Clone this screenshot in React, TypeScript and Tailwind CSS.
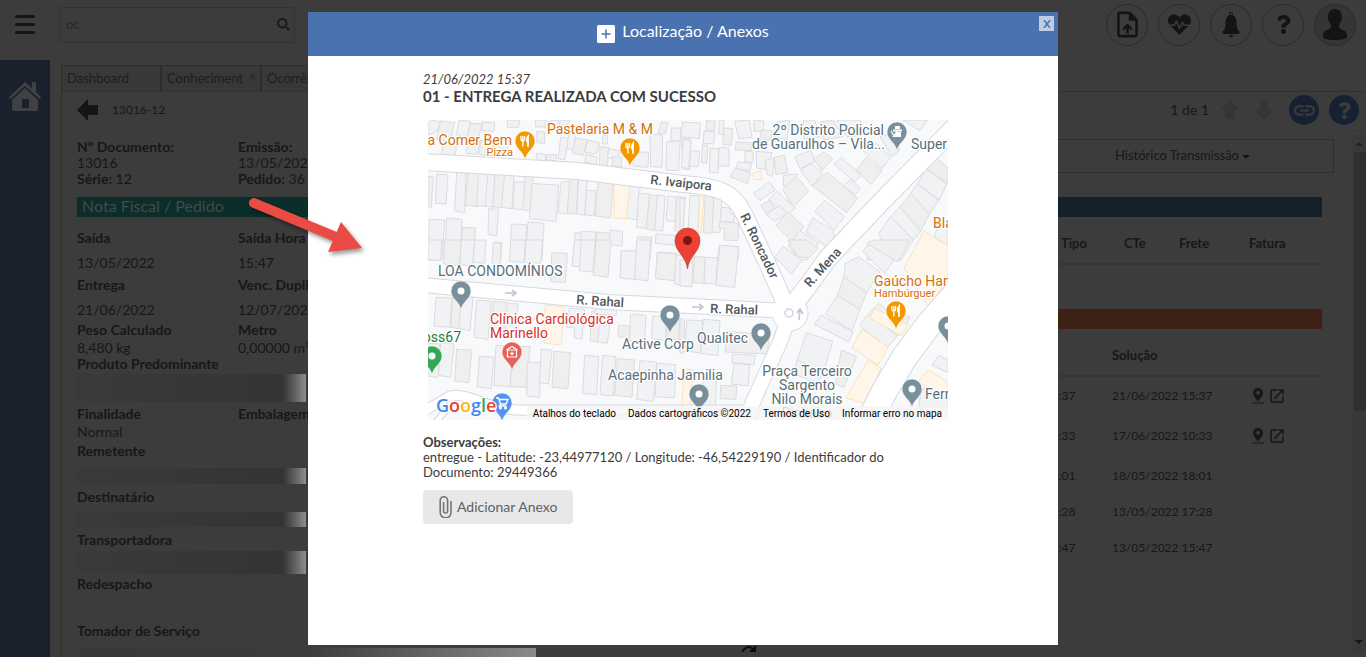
import type { ReactNode } from "react";
import { FaHeartbeat, FaQuestion, FaSearch } from "react-icons/fa";
import { MdOutlineUploadFile, MdOpenInNew, MdLink } from "react-icons/md";

/* ---------- map data ---------- */

// each quadrant is traced on a 3x grid
const quadrants = [
  {
    transform: "translate(-8 -60) scale(.33333)",
    shapes: [
      "35,180 62,186 50,215 24,225 24,190", "62,183 104,188 90,245 50,238", "72,245 112,250 104,288 64,284", "118,180 152,184 142,232 108,226",
      "152,190 186,192 174,240 140,236", "186,186 224,188 222,214 186,212", "145,240 180,246 172,283 138,280", "182,240 222,242 220,286 178,284",
      "262,180 300,180 296,202 262,202", "346,180 376,180 376,202 346,200", "350,214 374,216 374,250 350,248", "238,236 266,240 262,268 236,264",
      "350,280 378,284 376,302 348,300", "380,284 410,284 408,302 378,300", "422,232 446,234 434,300 414,296", "446,222 466,224 462,268 440,266",
      "468,234 502,240 490,286 456,280", "504,240 540,250 528,282 494,276", "498,282 532,292 528,314 494,306", "540,260 568,262 562,318 538,314",
      "548,226 562,226 562,252 548,252", "566,266 600,272 592,300 562,292", "578,290 606,292 604,320 576,318", "640,278 686,276 684,322 640,318",
      "690,222 728,226 726,322 692,320", "724,186 744,188 736,222 714,220", "740,244 780,244 776,332 738,330", "754,204 784,204 780,244 752,242",
      "784,236 810,236 810,330 788,326", "400,180 428,186 404,196 380,186", "420,180 450,180 440,198 418,196",
      "24,350 40,350 34,442 24,440", "50,342 84,345 78,432 46,430", "110,338 138,340 134,458 104,452", "144,328 180,332 176,440 136,436",
      "176,330 206,336 200,440 170,436", "204,336 226,338 220,442 196,438", "226,336 254,338 248,444 218,440", "254,340 282,342 276,446 244,442",
      "284,366 316,366 312,450 278,446", "316,344 340,346 332,452 308,450", "336,370 416,376 408,484 328,476", "424,364 450,366 442,462 414,458",
      "450,354 474,356 470,462 442,460", "476,358 502,360 494,466 470,462", "500,390 528,392 522,468 494,464", "534,362 580,366 572,474 526,468",
      "628,370 662,370 650,480 618,474", "656,400 688,402 680,506 650,502", "690,404 714,408 704,512 678,506", "712,404 736,408 728,514 704,510",
      "744,408 770,412 764,486 738,482", "770,410 796,412 788,516 764,512",
      "28,478 74,480 66,600 24,600", "80,474 126,478 120,600 74,600", "128,502 166,504 160,600 122,600", "164,544 198,548 190,600 160,600",
      "206,446 236,448 230,528 204,524", "222,546 246,548 242,600 220,600", "274,492 320,494 314,600 270,600", "324,486 372,490 366,600 316,600",
      "396,580 440,580 440,600 394,600", "466,518 486,520 476,600 460,600", "484,514 528,516 520,600 478,600", "530,516 574,520 564,600 522,600",
      "570,510 608,514 606,558 568,554", "604,572 650,574 648,600 602,600", "652,530 696,532 690,600 650,600", "708,522 766,526 764,556 706,550", "712,576 770,580 768,600 710,600",
    ],
  },
  {
    transform: "translate(252 -60) scale(.33333)",
    shapes: [
      "8,186 62,190 58,236 2,230", "80,182 106,184 104,212 78,210", "72,212 104,216 102,252 70,250", "118,180 132,180 130,224 116,222",
      "132,204 158,206 154,256 128,254", "164,184 208,180 216,232 176,236", "222,180 252,184 248,214 222,214", "244,210 276,212 274,240 242,240",
      "10,240 34,242 26,326 4,322", "32,272 60,274 54,320 28,318", "68,254 84,256 80,310 64,308", "90,264 118,266 114,340 88,336",
      "118,262 146,264 148,318 114,318", "168,246 214,248 216,272 166,270", "196,274 220,276 218,308 194,306", "174,306 214,310 210,332 168,326",
      "166,324 212,338 202,370 150,350", "228,274 276,278 264,330 230,324", "254,302 282,294 278,350 262,344", "282,292 314,286 324,338 288,344",
      "290,186 330,180 320,240 284,230", "370,180 404,180 420,230 372,236", "420,186 460,180 490,230 430,240", "470,180 540,180 560,226 500,230",
      "344,290 392,272 406,304 360,326", "400,296 432,276 458,296 426,332", "362,330 394,310 428,340 396,378", "462,312 482,292 544,346 524,366",
      "530,330 560,290 606,332 572,374", "548,270 590,250 632,292 606,326", "600,230 640,220 660,270 636,290", "398,378 442,336 532,414 500,458",
      "490,378 512,358 542,386 524,404", "310,346 352,342 346,370 310,378", "308,388 348,348 386,392 340,442", "266,418 292,394 346,444 320,470",
      "220,400 268,366 286,390 240,422", "242,436 270,420 284,446 260,462", "258,462 300,436 320,462 282,484", "404,454 434,422 494,470 462,510",
      "288,496 324,456 372,500 334,542", "378,516 398,474 458,510 464,540 440,560", "324,556 360,512 416,550 380,600 358,600", "280,600 310,560 350,592 346,600",
      "0,414 14,414 10,508 0,506", "30,406 58,408 54,520 24,516", "76,404 102,406 98,520 70,518", "102,408 126,410 120,518 96,516",
      "124,442 150,444 150,460 164,462 162,486 120,484", "120,484 176,490 174,542 132,540 134,506 116,504", "118,556 176,560 174,600 112,600",
      "40,590 76,592 74,600 40,600",
      "764,288 804,324 804,370 738,326", "738,326 800,372 778,420 712,372", "712,372 776,420 748,462 692,400", "692,400 748,462 722,514 660,440",
      "660,440 722,514 700,540 632,470", "632,470 700,540 664,600 620,576 596,520", "582,546 664,600 560,600", "770,510 804,480 804,560 762,530",
      "668,180 720,212 742,180",
    ],
  },
  {
    transform: "translate(-8 120) scale(.33333)",
    shapes: [
      "24,0 66,0 62,62 24,58", "74,0 124,0 118,78 70,72", "124,0 164,0 158,78 120,74", "164,0 198,0 194,70 160,66", "220,8 244,10 240,76 216,72",
      "272,0 316,0 312,68 268,64", "318,0 368,0 362,70 314,66", "396,38 442,40 436,128 392,124", "464,0 488,0 480,80 456,78", "484,0 526,0 518,96 478,92",
      "528,0 574,0 564,112 520,106", "604,32 650,34 644,118 600,114", "650,0 692,0 684,122 644,118", "712,38 770,42 764,122 706,116", "768,44 810,48 810,140 764,132",
      "48,172 96,174 90,262 42,258", "98,160 124,162 118,266 92,262", "124,164 160,166 150,272 116,266", "170,180 214,184 204,298 162,292",
      "220,184 264,188 256,292 212,288", "262,190 294,192 286,290 254,286", "448,204 494,208 486,296 462,294 464,264 440,262", "516,212 544,216 536,306 510,302",
      "544,216 574,218 562,310 532,306", "526,206 590,208 588,226 524,222", "596,256 630,258 628,294 594,290", "632,222 678,226 674,308 628,302",
      "698,228 740,230 736,300 694,296", "742,232 780,234 776,300 740,296", "24,310 60,312 54,412 24,408", "62,308 102,312 92,412 56,406",
      "110,328 156,330 146,428 104,422", "178,348 222,352 214,446 172,440", "228,316 280,318 270,440 222,436", "280,318 330,320 318,442 270,440",
      "322,366 364,368 358,472 320,468", "364,328 396,330 386,432 358,428", "402,334 452,338 444,446 396,442", "494,346 536,350 530,464 488,460",
      "548,346 588,350 580,468 540,464", "592,356 644,360 636,472 584,466", "660,362 710,366 700,484 650,478", "710,370 766,374 764,474 706,470",
    ],
  },
  {
    transform: "translate(252 120) scale(.33333)",
    shapes: [
      "0,60 38,60 36,140 0,138", "44,50 76,52 72,130 38,128", "76,52 112,54 108,132 72,130", "120,16 176,20 164,142 108,136",
      "0,236 14,240 10,340 0,338", "20,240 68,242 62,338 14,334", "70,238 120,242 114,346 62,340", "136,274 268,284 262,342 136,336",
      "158,342 226,346 222,374 156,368", "162,370 210,374 204,438 154,432", "122,436 170,438 168,478 120,476", "70,410 110,412 106,500 66,498",
      "284,50 310,20 366,60 334,102", "324,0 380,0 414,24 388,54 352,50", "380,278 458,304 430,400 352,360", "352,360 430,400 410,430 340,400",
      "484,330 530,350 492,442 466,432", "402,252 424,226 520,276 506,306", "436,222 472,166 540,208 516,272", "472,166 492,110 560,158 540,208",
      "496,70 536,50 600,96 560,158 492,110", "548,34 570,8 642,60 614,100", "580,0 690,0 654,66 560,10", "538,256 566,222 652,288 622,322",
      "566,222 596,190 680,260 652,288", "650,220 690,230 676,262 650,250", "756,376 776,346 804,360 804,398", "722,460 748,420 804,450 804,500 716,500",
      "12,500 60,500 60,540 12,540",
    ],
  },
];

const shops = [
  "186,63 202,65 198,99 186,98", "272,76 276,76 273,113 270,113", "325,53 333,51 334,59 326,60", "117,185 136,187 133,225 116,223",
  "256,249 266,250 262,286 254,285", "446,188 480,205 474,216 442,198", "434,209 460,227 450,245 424,228", "440,240 453,248 438,284 418,278",
  "476,148 496,111 520,126 520,160 500,186", "490,262 500,250 520,262 520,280", "512,165 520,156 520,170",
];

const roads = [
  { d: "M-5 42L150 51L255 64C300 67 307 76 318 98L340 145L359 188", w: 16 },
  { d: "M-5 165L180 182L262 186L358 191", w: 14 },
  { d: "M360 192L382 163L400 138L455 80L530 4", w: 18 },
  { d: "M360 200L352 222L324 284L318 304", w: 14 },
  { d: "M532 169L502 203L476 238L457 270L438 308", w: 25 },
  { d: "M-2 290L22 276C44 272 60 292 100 290H320", w: 9 },
  { d: "M8 302L26 280", w: 5 },
];

const ROAD_LABEL = "font-['Roboto',sans-serif] text-[13px] font-medium";
const PLACE_LABEL = "font-['Roboto',sans-serif] text-[14px]";

const streetNames = [
  { x: 222, y: 64, angle: 6, text: "R. Ivaipora" },
  { x: 312, y: 96, angle: 64, text: "R. Roncador" },
  { x: 382, y: 168, angle: -48, text: "R. Mena" },
  { x: 148, y: 184, angle: 4, text: "R. Rahal" },
  { x: 282, y: 193, angle: 2, text: "R. Rahal" },
];

const places: { x: number; y: number; text: string; fill: string; anchor?: "end" | "middle"; small?: boolean }[] = [
  { x: 119, y: 14, text: "Pastelaria M & M", fill: "#d56e0c" },
  { x: 84, y: 25, text: "a Comer Bem", fill: "#d56e0c", anchor: "end" },
  { x: 85, y: 36, text: "Pizza", fill: "#d56e0c", anchor: "end", small: true },
  { x: 456, y: 15, text: "2º Distrito Policial", fill: "#577079", anchor: "end" },
  { x: 457, y: 29, text: "de Guarulhos – Vila...", fill: "#577079", anchor: "end" },
  { x: 483, y: 29, text: "Super", fill: "#577079" },
  { x: 505, y: 108, text: "Bla", fill: "#d56e0c" },
  { x: 10, y: 156, text: "LOA CONDOMÍNIOS", fill: "#577079" },
  { x: 62, y: 204, text: "Clínica Cardiológica", fill: "#d5312a" },
  { x: 62, y: 218, text: "Marinello", fill: "#d5312a" },
  { x: 33, y: 222, text: "oss67", fill: "#188038", anchor: "end" },
  { x: 194, y: 229, text: "Active Corp", fill: "#577079" },
  { x: 269, y: 223, text: "Qualitec", fill: "#577079" },
  { x: 180, y: 260, text: "Acaepinha Jamilia", fill: "#577079" },
  { x: 379, y: 256, text: "Praça Terceiro", fill: "#577079", anchor: "middle" },
  { x: 379, y: 270, text: "Sargento", fill: "#577079", anchor: "middle" },
  { x: 379, y: 284, text: "Nilo Morais", fill: "#577079", anchor: "middle" },
  { x: 379, y: 298, text: "Pinheiro", fill: "#577079", anchor: "middle" },
  { x: 446, y: 166, text: "Gaúcho Ham", fill: "#d56e0c" },
  { x: 446, y: 177, text: "Hambúrguer", fill: "#d56e0c", small: true },
  { x: 497, y: 279, text: "Ferr", fill: "#577079" },
];

const glyphs: Record<string, ReactNode> = {
  dot: <circle r="3.5" fill="#fff" />,
  food: (
    <g stroke="#fff" fill="none" strokeLinecap="round">
      <path d="M-4-4.5v3q0 1.5 1.8 1.5T-.4-1.5v-3M-2.2-4.5V5" strokeWidth="1.3" />
      <path d="M3 5v-9.500q-1.500 2-1 5h1" strokeWidth="1.800" />
    </g>
  ),
  police: (
    <g fill="#fff">
      <path d="M-2-6h5v3h-5zM-4-2.500h9v2h-9zM-1 0h5v5h-9l3-2z" />
      <path d="M-6-1l3 5 3-5" fill="none" stroke="#fff" strokeWidth="1.300" />
    </g>
  ),
  clinic: (
    <g fill="none" stroke="#fff" strokeWidth="1.200">
      <path d="M-5.500-2L0-5.500 5.500-2M-4.500-2v7h9v-7zM0-.500v4M-2 1.500h4" />
    </g>
  ),
  cart: (
    <g fill="none" stroke="#fff" strokeWidth="1.400">
      <path d="M-6-5h2.500l2 6h5.500l2-4.500h-8.500M-1.500 1l-1 2h7" />
      <circle cx="-1.500" cy="5" r=".8" fill="#fff" />
      <circle cx="3.500" cy="5" r=".8" fill="#fff" />
    </g>
  ),
};

const pins = [
  { x: 97, y: 21, fill: "#f29900", glyph: "food" },
  { x: 202, y: 28, fill: "#f29900", glyph: "food" },
  { x: 469, y: 12, fill: "#78909c", glyph: "police" },
  { x: 33, y: 171, fill: "#78909c", glyph: "dot" },
  { x: 4, y: 236, fill: "#34a853", glyph: "dot" },
  { x: 84, y: 232, fill: "#e5635c", glyph: "clinic" },
  { x: 242, y: 195, fill: "#78909c", glyph: "dot" },
  { x: 74, y: 283, fill: "#5491f5", glyph: "cart" },
  { x: 333, y: 213, fill: "#78909c", glyph: "dot" },
  { x: 271, y: 274, fill: "#78909c", glyph: "dot" },
  { x: 468, y: 191, fill: "#f29900", glyph: "food" },
  { x: 484, y: 269, fill: "#78909c", glyph: "dot" },
  { x: 520, y: 206, fill: "#78909c", glyph: "dot" },
];

function MapView() {
  return (
    <div className="relative mx-[5px] mt-[15px] h-[300px] w-[520px] overflow-hidden">
      <svg viewBox="0 0 520 300" width="520" height="300" className="block bg-[#f8f9fb]">
        {quadrants.map((q) => (
          <g key={q.transform} transform={q.transform} stroke="#dadce0" strokeWidth="3">
            {q.shapes.map((points, i) => (
              <polygon key={points} points={points} fill={i % 3 === 1 ? "#f0efef" : "#f0f2f4"} />
            ))}
          </g>
        ))}
        {shops.map((points) => (
          <polygon key={points} points={points} fill="#fff5e9" stroke="#fbe3bb" />
        ))}

        <g fill="none" stroke="#d5d8e0">
          {roads.map((r) => <path key={r.d} d={r.d} strokeWidth={r.w + 2} />)}
        </g>
        <circle cx="362" cy="193" r="18" fill="#fff" stroke="#d5d8e0" />
        <g fill="none" stroke="#fff">
          {roads.map((r) => <path key={r.d} d={r.d} strokeWidth={r.w} />)}
        </g>
        <circle cx="361" cy="193" r="4" fill="#fff" stroke="#ced2dc" strokeWidth="1.500" />
        <g fill="none" stroke="#c0c5d6" strokeWidth="1.600">
          <path d="M77 173h10M84 170l4 3-4 3" />
          <path d="M264 187h9M271 184l4 3-4 3" />
          <path d="M371 200l1-10M369 193l3-4 3 5" />
        </g>

        <g className={ROAD_LABEL} fill="#50575e" stroke="#fff" strokeWidth="3" paintOrder="stroke" strokeLinejoin="round">
          {streetNames.map((s) => (
            <text key={s.x} transform={`translate(${s.x} ${s.y}) rotate(${s.angle})`}>{s.text}</text>
          ))}
        </g>

        {pins.map((p) => (
          <g key={`${p.x}-${p.y}`} transform={`translate(${p.x} ${p.y})`}>
            <path d="M0 18.500C-2 10-10 7.500-10 0a10 10 0 1 1 20 0C10 7.500 2 10 0 18.500Z" fill={p.fill} stroke="#fff" strokeWidth=".5" />
            {glyphs[p.glyph]}
          </g>
        ))}

        <g className={PLACE_LABEL} stroke="#fff" strokeWidth="2.500" paintOrder="stroke" strokeLinejoin="round">
          {places.map((p) => (
            <text key={p.text} x={p.x} y={p.y} fill={p.fill} textAnchor={p.anchor} className={p.small ? "text-[11px]" : undefined}>
              {p.text}
            </text>
          ))}
        </g>

        <path d="M259.500 149C258 136 247 132 247 120.500a12.500 12.500 0 0 1 25 0C272 132 261 136 259.500 149Z" fill="#ea4335" stroke="#c5362c" strokeWidth=".6" />
        <circle cx="259.500" cy="120.500" r="4.500" fill="#811411" />

        <text x="8" y="292" className="font-['Open_Sans',sans-serif] text-[18px] font-semibold" stroke="#fff" strokeWidth="2" paintOrder="stroke">
          <tspan fill="#4285f4">G</tspan><tspan fill="#ea4335">o</tspan><tspan fill="#fbbc05">o</tspan>
          <tspan fill="#4285f4">g</tspan><tspan fill="#34a853">l</tspan><tspan fill="#ea4335">e</tspan>
        </text>
      </svg>
      <div className="absolute right-0 bottom-0 flex h-[14px] items-center gap-3 bg-[#f5f5f5]/80 px-[6px] font-['Roboto',sans-serif] text-[10px] whitespace-nowrap text-black">
        <button type="button">Atalhos do teclado</button>
        <span>Dados cartográficos ©2022</span>
        <a href="#termos">Termos de Uso</a>
        <a href="#erro">Informar erro no mapa</a>
      </div>
    </div>
  );
}

/* ---------- background page ---------- */

const headerButton = "flex size-[42px] items-center justify-center rounded-full border border-[#2b2b2b] text-[#141414]";

function TopBar() {
  return (
    <header className="flex h-[50px] shrink-0 items-center border-b border-[#393939] pr-[10px] pl-[15px]">
      <button type="button" aria-label="Menu" className="flex flex-col gap-[5px]">
        <span className="h-[3px] w-5 rounded bg-[#151515]" />
        <span className="h-[3px] w-5 rounded bg-[#151515]" />
        <span className="h-[3px] w-5 rounded bg-[#151515]" />
      </button>
      <form className="ml-[25px] flex h-[36px] w-[235px] items-center border border-[#333] px-1">
        <input aria-label="Pesquisar" defaultValue="oc" className="w-full bg-transparent px-px text-[13px] text-[#262626] outline-none" />
        <button type="submit" aria-label="Buscar"><FaSearch className="size-[13px] text-[#1c1c1c]" /></button>
      </form>
      <div className="ml-auto flex gap-[10px]">
        <button type="button" aria-label="Enviar arquivo" className={headerButton}><MdOutlineUploadFile className="size-[31px]" /></button>
        <button type="button" aria-label="Status" className={headerButton}><FaHeartbeat className="size-[23px]" /></button>
        <button type="button" aria-label="Notificações" className={headerButton}><BellIcon /></button>
        <button type="button" aria-label="Ajuda" className={headerButton}><FaQuestion className="size-[19px]" /></button>
        <button type="button" aria-label="Perfil" className={`${headerButton} bg-[#343535]`}>
          <svg viewBox="0 0 24 31" width="24" height="31" fill="currentColor">
            <path d="M12 0c5 0 7 4 7 8 0 4-2 6-3 8 0 3 1 4 4 5 3 1 4 3 4 7 0 2-5 3-12 3S0 30 0 28c0-4 1-6 4-7 3-1 4-2 4-5-1-2-3-4-3-8 0-4 2-8 7-8Z" />
          </svg>
        </button>
      </div>
    </header>
  );
}

function BellIcon() {
  return (
    <svg viewBox="0 0 18 26" width="18" height="26" fill="currentColor">
      <circle cx="9" cy="2" r="1.500" fill="none" stroke="currentColor" />
      <path d="M9 3c4 0 5.500 4 5.500 8 0 5 1 7 3 8.500.8 1-.2 2.500-1.500 2.500H2C.7 22-.3 20.500.5 19.500c2-1.500 3-3.500 3-8.500C3.500 7 5 3 9 3ZM7 23h4c0 3-4 3-4 0Z" />
    </svg>
  );
}

function Tabs() {
  return (
    <nav className="flex h-[26px] pl-[11px] text-[13px] text-[#1e1e1e]">
      <button type="button" className="w-[100px] border border-b-0 border-[#2d2d2d] bg-[#383838] pl-[5px] text-left">Dashboard</button>
      <button type="button" className="flex w-[100px] justify-between border border-b-0 border-[#2d2d2d] bg-[#383838] px-[5px] pt-[3px] text-left">
        Conheciment <span className="text-[10px] leading-3">x</span>
      </button>
      <button type="button" className="w-[100px] border border-b-0 border-[#2d2d2d] bg-[#383838] pl-[5px] text-left">Ocorrências</button>
    </nav>
  );
}

function Arrow({ className }: { className: string }) {
  return (
    <svg viewBox="0 0 22 22" className={className} fill="currentColor"><path d="M0 11L11 0v6h10v10H11v6z" /></svg>
  );
}

function Toolbar() {
  return (
    <div className="flex h-[39px] shrink-0 items-center border-b border-[#393939] pr-[7px] pb-[2px] pl-[15px]">
      <button type="button" aria-label="Voltar"><Arrow className="size-[22px] text-[#151515]" /></button>
      <span className="ml-[13px] text-[12px]">13016-12</span>
      <span className="ml-auto text-[14px] leading-4">1 de 1</span>
      <button type="button" aria-label="Anterior" className="ml-[11px]"><Arrow className="size-[20px] rotate-90 text-[#353535]" /></button>
      <button type="button" aria-label="Próximo" className="ml-[14px]"><Arrow className="size-[20px] -rotate-90 text-[#353535]" /></button>
      <button type="button" aria-label="Copiar link" className="ml-[15px] flex size-[30px] items-center justify-center rounded-full bg-[#182134] text-[#3c3c3c]">
        <MdLink className="size-[25px]" />
      </button>
      <button type="button" aria-label="Ajuda" className="ml-[10px] flex size-[30px] items-center justify-center rounded-full bg-[#182134] text-[#3c3c3c]">
        <FaQuestion className="size-[17px]" />
      </button>
    </div>
  );
}

function Pair({ a, b, className }: { a: ReactNode; b?: ReactNode; className?: string }) {
  return (
    <div className={`flex ${className ?? ""}`}>
      <span className="w-[161px] shrink-0">{a}</span>
      <span className="whitespace-nowrap">{b}</span>
    </div>
  );
}

function Redacted({ className }: { className: string }) {
  return <div className={`-ml-[2px] w-[231px] bg-linear-to-r from-[#3a3a3a] via-[#343434] via-90% to-[#8e8e8e] ${className}`} />;
}

function DocumentInfo() {
  return (
    <section className="w-[500px] shrink-0 text-[14px] leading-4">
      <Pair a={<b>Nº Documento:</b>} b={<b>Emissão:</b>} />
      <Pair a="13016" b="13/05/2022" />
      <Pair a={<><b>Série:</b> 12</>} b={<><b>Pedido:</b> 36</>} />
      <h2 className="mt-[10px] h-5 bg-[#0b2e2a] pl-[5px] text-[16px] leading-[18px] text-[#434a49]">Nota Fiscal / Pedido</h2>
      <Pair className="mt-[13px] font-bold" a="Saída" b="Saída Hora" />
      <Pair className="mt-[9px]" a="13/05/2022" b="15:47" />
      <Pair className="mt-[6px] font-bold" a="Entrega" b="Venc. Duplicata" />
      <Pair className="mt-[9px]" a="21/06/2022" b="12/07/2022" />
      <Pair className="mt-1 font-bold" a="Peso Calculado" b="Metro" />
      <Pair className="mt-[2px]" a="8,480 kg" b="0,00000 m³" />
      <div className="font-bold">Produto Predominante</div>
      <Redacted className="mt-[2px] h-7" />
      <Pair className="mt-1 font-bold" a="Finalidade" b="Embalagem" />
      <div className="mt-[2px]">Normal</div>
      <div className="mt-[3px] font-bold">Remetente</div>
      <Redacted className="mt-[9px] h-4" />
      <div className="mt-[5px] font-bold">Destinatário</div>
      <Redacted className="mt-[7px] h-[15px]" />
      <div className="mt-[5px] font-bold">Transportadora</div>
      <Redacted className="mt-[3px] h-[23px]" />
      <div className="mt-[2px] font-bold">Redespacho</div>
      <div className="mt-[31px] font-bold">Tomador de Serviço</div>
    </section>
  );
}

const occurrences = [
  { date: "21/06/2022 15:37", solution: "21/06/2022 15:37", pinned: true, height: "h-[38px]" },
  { date: "17/06/2022 10:33", solution: "17/06/2022 10:33", pinned: true, height: "h-[44px]" },
  { date: "18/05/2022 18:01", solution: "18/05/2022 18:01", pinned: false, height: "h-[36px]" },
  { date: "13/05/2022 17:28", solution: "13/05/2022 17:28", pinned: false, height: "h-[36px]" },
  { date: "13/05/2022 15:47", solution: "13/05/2022 15:47", pinned: false, height: "h-[36px]" },
];

function PinIcon() {
  return (
    <svg viewBox="0 0 12 16" width="12" height="16" fill="currentColor">
      <path fillRule="evenodd" d="M6 0a5 5 0 0 1 5 5c0 3-3 6-5 8.500C4 11 1 8 1 5a5 5 0 0 1 5-5Zm0 3a1.900 1.900 0 1 0 0 3.800A1.900 1.900 0 0 0 6 3ZM0 14.500h12v1H0z" />
    </svg>
  );
}

function History() {
  return (
    <section className="ml-10 flex-1 text-[13px]">
      <div className="flex h-[34px] items-center justify-end border border-[#2d2d2d] pr-[83px]">
        <button type="button" className="flex items-center gap-[3px]">
          Histórico Transmissão
          <span className="mt-[2px] border-x-4 border-t-4 border-x-transparent border-t-[#151515]" />
        </button>
      </div>
      <div className="mr-3">
        <div className="mt-6 h-5 bg-[#14212b]" />
        <table className="w-full table-fixed text-left">
          <thead>
            <tr className="h-[47px] border-b-2 border-[#363636]">
              <td />
              <th className="w-[63px] pt-2">Tipo</th>
              <th className="w-[55px] pt-2">CTe</th>
              <th className="w-[70px] pt-2">Frete</th>
              <th className="w-[73px] pt-2">Fatura</th>
            </tr>
          </thead>
        </table>
        <div className="mt-11 h-5 bg-[#3e2116]" />
        <table className="w-full table-fixed text-left">
          <thead>
            <tr className="h-[47px] border-b-2 border-[#363636]">
              <td />
              <td className="w-[137px]" />
              <th className="w-[140px] pt-2">Solução</th>
              <td className="w-[70px]" />
            </tr>
          </thead>
          <tbody className="text-[12px]">
            {occurrences.map((o) => (
              <tr key={o.date} className={o.height}>
                <td />
                <td>{o.date}</td>
                <td>{o.solution}</td>
                <td>
                  {o.pinned && (
                    <span className="flex items-center gap-1">
                      <a href="#mapa" aria-label="Localização"><PinIcon /></a>
                      <a href="#abrir" aria-label="Abrir"><MdOpenInNew className="size-[18px]" /></a>
                    </span>
                  )}
                </td>
              </tr>
            ))}
          </tbody>
        </table>
      </div>
    </section>
  );
}

function Scrollbar() {
  return (
    <div className="ml-[18px] flex w-[14px] shrink-0 flex-col items-center bg-[#393939]">
      <span className="mt-[7px] border-x-4 border-b-4 border-x-transparent border-b-[#222]" />
      <span className="mt-[6px] h-[259px] w-3 self-end bg-[#2f2f2f]" />
      <span className="mt-auto mb-[7px] border-x-4 border-t-4 border-x-transparent border-t-[#151515]" />
    </div>
  );
}

/* ---------- modal ---------- */

function LocationModal() {
  return (
    <div role="dialog" aria-labelledby="modal-title" className="flex w-[750px] flex-col bg-white text-[#3c3c3c]">
      <div className="relative flex h-[44px] items-center justify-center gap-[7px] bg-[#4a72b0] pb-1 text-white">
        <svg viewBox="0 0 18 18" width="18" height="18" className="mt-1">
          <rect width="18" height="18" rx="1.500" fill="#fff" />
          <path d="M9 4.500v9M4.500 9h9" stroke="#4a72b0" strokeWidth="1.500" />
        </svg>
        <h1 id="modal-title" className="pb-[2px] text-[16px]">Localização / Anexos</h1>
        <button type="button" aria-label="Fechar" className="absolute top-1 right-1 flex size-[15px] items-center justify-center bg-[#c0cce1]">
          <svg viewBox="0 0 8 8" width="8" height="8" stroke="#4a72b0" strokeWidth="1.500"><path d="M1 0l6 8M7 0L1 8" /></svg>
        </button>
      </div>
      <div className="mx-auto w-[520px] pt-4 text-[13px] leading-[15px]">
        <p className="italic">21/06/2022 15:37</p>
        <h2 className="mt-[1px] text-[15px] leading-[17px] font-bold">01 - ENTREGA REALIZADA COM SUCESSO</h2>
        <MapView />
        <p className="mt-[15px] font-bold">Observações:</p>
        <p>entregue - Latitude: -23,44977120 / Longitude: -46,54229190 / Identificador do Documento: 29449366</p>
        <button type="button" className="mt-[10px] flex h-[34px] w-[150px] items-center rounded bg-[#e8e8e8] pb-px pl-4 text-[14px] text-[#616161]">
          <svg viewBox="0 0 13 22" width="13" height="22" fill="none" stroke="#757575" strokeWidth="1.600" className="mr-[5px]">
            <path d="M12 5v11.500a5.300 5.300 0 0 1-10.800 0V4.500a3.700 3.700 0 0 1 7.400 0V15a2 2 0 0 1-4 0V6" />
          </svg>
          Adicionar Anexo
        </button>
      </div>
    </div>
  );
}

export default function App() {
  return (
    <div className="relative flex h-screen flex-col overflow-hidden bg-[#3c3c3c] font-['Lato','Open_Sans',sans-serif] text-[#171717]">
      <TopBar />
      <div className="mt-[10px] flex min-h-0 flex-1">
        <aside className="w-[50px] shrink-0 bg-[#1a202c] pt-5">
          <a href="#inicio" aria-label="Início" className="flex justify-center">
            <svg viewBox="0 0 32 32" width="32" height="32" fill="#3f4145">
              <path d="M16 2L0 17l1.500 2L16 6l14.500 13 1.500-2-5-5V2h-4v6z" />
              <path fillRule="evenodd" d="M16 8L3 20v9q0 2 2 2h22q2 0 2-2v-9zm-3 11h7v9h-7z" />
            </svg>
          </a>
        </aside>
        <div className="flex min-w-0 flex-1 flex-col pt-[5px]">
          <Tabs />
          <div className="ml-[11px] flex min-h-0 flex-1 flex-col border-t border-l border-[#313131]">
            <Toolbar />
            <div className="mt-1 mb-[6px] flex min-h-0 flex-1">
              <main className="flex min-w-0 flex-1 overflow-hidden pt-1 pl-[15px]">
                <DocumentInfo />
                <History />
              </main>
              <Scrollbar />
            </div>
          </div>
        </div>
      </div>

      <div className="absolute bottom-0 left-[80px] h-[9px] w-[456px] bg-linear-to-r from-[#383838] via-[#3c3c3c] via-50% to-[#8a8a8a]" />
      <svg viewBox="0 0 16 7" className="absolute bottom-[5px] left-[741px] h-[7px] w-4">
        <path d="M1 7q5-8 11-3" fill="none" stroke="#0c0c0c" strokeWidth="2" />
        <path d="M15 0v7H8z" fill="#0c0c0c" />
      </svg>

      <div className="absolute inset-0 flex justify-center py-3">
        <LocationModal />
      </div>

      <svg viewBox="0 0 120 66" className="absolute top-[192px] left-[246px] h-[66px] w-[120px] drop-shadow-[2px_3px_2px_rgba(0,0,0,0.4)]">
        <path d="M8 11L90 45" stroke="#ea4b45" strokeWidth="10" strokeLinecap="round" />
        <path d="M95 30l21 26-34 4z" fill="#ea4b45" />
      </svg>
    </div>
  );
}
